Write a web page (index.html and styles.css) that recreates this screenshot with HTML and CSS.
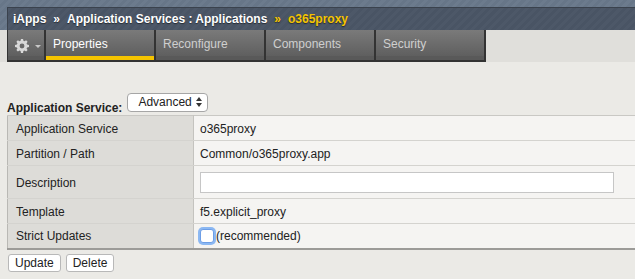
FILE: index.html
```html
<!DOCTYPE html>
<html lang="en">
<head>
    <meta charset="UTF-8">
    <title>o365proxy</title>
    <link rel="stylesheet" href="styles.css">
</head>
<body>
    <div class="banner">
        <div class="crumbs">
            <span>iApps</span>
            <span class="sep">&raquo;</span>
            <span>Application Services : Applications</span>
            <span class="sep current">&raquo;</span>
            <span class="current">o365proxy</span>
        </div>
    </div>

    <div class="tab-row">
        <div class="gear-box">
            <svg width="14" height="14" viewBox="0 0 16 16" class="gear">
                <path fill="#d8d8d8" d="M6.8 0h2.4l.4 2.1 1.3.6 1.8-1.2 1.7 1.7-1.2 1.8.6 1.3 2.2.5v2.4l-2.2.4-.6 1.3 1.2 1.8-1.7 1.7-1.8-1.2-1.3.6-.4 2.2H6.8l-.4-2.2-1.3-.6-1.8 1.2-1.7-1.7 1.2-1.8-.6-1.3L0 9.2V6.8l2.2-.5.6-1.3-1.2-1.8 1.7-1.7 1.8 1.2 1.3-.6zM8 5.2a2.8 2.8 0 100 5.6 2.8 2.8 0 000-5.6z"/>
            </svg>
            <span class="caret"></span>
        </div>
        <div class="tab active">Properties</div>
        <div class="tab">Reconfigure</div>
        <div class="tab">Components</div>
        <div class="tab">Security</div>
    </div>

    <div class="content">
        <div class="service-line">
            <span class="service-label">Application Service:</span>
            <span class="select">Advanced
                <svg width="6" height="10" viewBox="0 0 6 10" class="arrows">
                    <path fill="#333" d="M3 0l3 4H0zM3 10l3-4H0z"/>
                </svg>
            </span>
        </div>

        <table class="props">
            <tr>
                <td class="key">Application Service</td>
                <td>o365proxy</td>
            </tr>
            <tr>
                <td class="key">Partition / Path</td>
                <td>Common/o365proxy.app</td>
            </tr>
            <tr class="tall">
                <td class="key">Description</td>
                <td><span class="text-input"></span></td>
            </tr>
            <tr>
                <td class="key">Template</td>
                <td>f5.explicit_proxy</td>
            </tr>
            <tr class="last">
                <td class="key">Strict Updates</td>
                <td><span class="check"></span>(recommended)</td>
            </tr>
        </table>

        <div class="actions">
            <span class="btn">Update</span>
            <span class="btn">Delete</span>
        </div>
    </div>
</body>
</html>
```

FILE: styles.css
```css
* {
    margin: 0;
    padding: 0;
    box-sizing: border-box;
}

body {
    font-family: "Liberation Sans", Arial, sans-serif;
    font-size: 12px;
    color: #222;
    background: #ebeae6;
}

/* Breadcrumb banner */
.banner {
    background: repeating-linear-gradient(135deg, #6c7b8d 0, #6c7b8d 3px, #677688 3px, #677688 6px);
    padding-top: 7px;
    padding-left: 7px;
}

.crumbs {
    height: 23px;
    line-height: 22px;
    background: repeating-linear-gradient(135deg, #4d5868 0, #4d5868 3px, #495464 3px, #495464 6px);
    border-top: 1px solid #3a424d;
    border-left: 1px solid #3a424d;
    padding-left: 5px;
    color: #fff;
    font-weight: bold;
    text-shadow: 0 1px 1px rgba(0, 0, 0, 0.5);
    display: flex;
    gap: 5px;
}

.crumbs .sep {
    padding: 0 2px;
}

.crumbs .current {
    color: #f5c400;
}

/* Tabs */
.tab-row {
    display: flex;
    background: #e0dfdb;
    padding-left: 7px;
}

.gear-box,
.tab {
    height: 32px;
    background: linear-gradient(#7a7a7a, #5f5f5f 26px, #595959 26px, #595959);
    border-bottom: 2px solid #333;
    border-right: 2px solid #333;
}

.gear-box {
    width: 39px;
    border-left: 1px solid #333;
    display: flex;
    align-items: center;
    padding: 2px 0 0 7px;
    gap: 6px;
}

.caret {
    width: 0;
    height: 0;
    border-left: 3px solid transparent;
    border-right: 3px solid transparent;
    border-top: 3px solid #c8c8c8;
}

.tab {
    width: 110px;
    padding: 6px 0 0 7px;
    line-height: 16px;
    color: #cfcfcf;
}

.tab.active {
    color: #fff;
    box-shadow: inset 0 -4px 0 #f5c400;
}

/* Main content */
.content {
    padding: 32px 0 0 7px;
}

.service-line {
    display: flex;
    align-items: flex-end;
    gap: 5px;
    height: 21px;
}

.service-label {
    font-weight: bold;
    line-height: 14px;
}

.select {
    display: flex;
    align-items: center;
    gap: 4px;
    height: 19px;
    padding: 0 5px 1px 10px;
    font-size: 12px;
    background: #fff;
    border: 1px solid #a6a6a6;
    border-radius: 4px;
    margin-bottom: 3px;
}

.props {
    width: 100%;
    border-collapse: collapse;
    background: #f5f4f2;
    border-top: 1px solid #c9c8c4;
    border-left: 1px solid #b9b8b4;
}

.props td {
    height: 25px;
    padding: 1px 6px 0;
    border-bottom: 1px solid #d4d3cf;
    vertical-align: middle;
}

.props td.key {
    width: 186px;
    padding-left: 8px;
    background: #dddcd8;
    border-right: 1px solid #c4c3bf;
}

.props tr.tall td {
    height: 33px;
}

.props tr.last td {
    height: 25px;
    border-bottom: 2px solid #9c9b98;
}

.text-input {
    display: block;
    width: 414px;
    height: 21px;
    background: #fff;
    border: 1px solid #c6c6c6;
}

.check {
    display: inline-block;
    width: 14px;
    height: 14px;
    margin-right: 2px;
    vertical-align: -3px;
    background: #fff;
    border: 1px solid #6d9ee6;
    border-radius: 3px;
    box-shadow: 0 0 0 2px #8cb8f2;
}

.actions {
    display: flex;
    gap: 5px;
    padding: 4px 0 0 1px;
}

.btn {
    height: 18px;
    line-height: 16px;
    padding: 0 6px;
    background: #fff;
    border: 1px solid #b8b8b8;
    border-radius: 3px;
}
```
